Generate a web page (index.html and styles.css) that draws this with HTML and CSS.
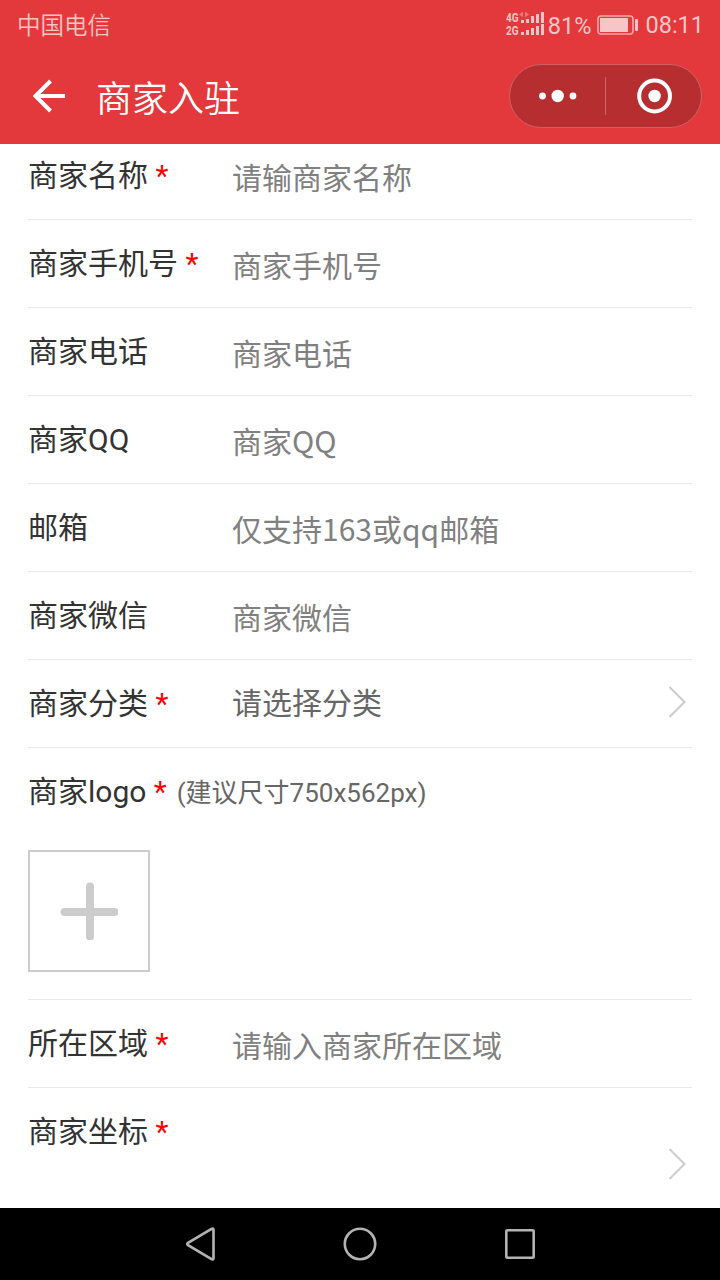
FILE: index.html
```html
<!DOCTYPE html>
<html lang="zh-CN">
<head>
    <meta charset="UTF-8">
    <meta name="viewport" content="width=device-width, initial-scale=1.0">
    <title>商家入驻</title>
    <link rel="stylesheet" href="styles.css">
</head>
<body>
    <div class="page">
        <div class="top">
            <!-- 状态栏 -->
            <div class="status-bar">
                <span class="carrier">中国电信</span>
                <div class="status-right">
                    <svg class="signal" width="40" height="28" viewBox="0 0 40 28">
                        <text x="1" y="12" textLength="12.5" lengthAdjust="spacingAndGlyphs">4G</text>
                        <text x="1" y="24.5" textLength="12.5" lengthAdjust="spacingAndGlyphs">2G</text>
                        <path class="data" d="M14 4.5l4-3v6zM24 4.5l-4-3v6z"/>
                        <path d="M16 10h3v3h-3zM21 9h3v4h-3zM26 6h3v7h-3zM31 4h3v9h-3zM36 2h3v11h-3z"/>
                        <path d="M16 22h3v3h-3zM21 20h3v5h-3zM26 18h3v7h-3zM31 16h3v9h-3zM36 14h3v11h-3z"/>
                    </svg>
                    <span class="percent">81%</span>
                    <svg class="battery" width="42" height="20" viewBox="0 0 42 20">
                        <rect x="1" y="1" width="35" height="18" rx="3" fill="none" stroke="#f4aaad" stroke-width="1.6"/>
                        <rect x="3" y="3" width="28" height="14" fill="#f7c5c7"/>
                        <rect x="38" y="4" width="3" height="12" rx="1" fill="#f7c5c7"/>
                    </svg>
                    <span class="time">08:11</span>
                </div>
            </div>
            <!-- 标题栏 -->
            <div class="nav-bar">
                <svg class="back" width="34" height="34" viewBox="0 0 34 34">
                    <path d="M33 17H3.5M18.5 2l-15 15 15 15" fill="none" stroke="#fff" stroke-width="4"/>
                </svg>
                <h1 class="title">商家入驻</h1>
                <div class="capsule">
                    <svg width="95" height="62" viewBox="0 0 95 62" fill="#fff">
                        <circle cx="32.5" cy="31" r="3.4"/>
                        <circle cx="47.7" cy="31" r="6.2"/>
                        <circle cx="63" cy="31" r="3.4"/>
                    </svg>
                    <span class="capsule-line"></span>
                    <svg width="95" height="62" viewBox="0 0 95 62">
                        <circle cx="48.6" cy="31" r="15.4" fill="none" stroke="#fff" stroke-width="4"/>
                        <circle cx="48.6" cy="31" r="6.2" fill="#fff"/>
                    </svg>
                </div>
            </div>
        </div>

        <!-- 表单 -->
        <div class="form">
            <div class="row">
                <div class="label">商家名称 <span class="required">*</span></div>
                <div class="placeholder">请输商家名称</div>
            </div>
            <div class="row">
                <div class="label">商家手机号 <span class="required">*</span></div>
                <div class="placeholder">商家手机号</div>
            </div>
            <div class="row">
                <div class="label">商家电话</div>
                <div class="placeholder">商家电话</div>
            </div>
            <div class="row">
                <div class="label">商家QQ</div>
                <div class="placeholder">商家QQ</div>
            </div>
            <div class="row">
                <div class="label">邮箱</div>
                <div class="placeholder">仅支持163或qq邮箱</div>
            </div>
            <div class="row">
                <div class="label">商家微信</div>
                <div class="placeholder">商家微信</div>
            </div>
            <div class="row">
                <div class="label">商家分类 <span class="required">*</span></div>
                <div class="picker">请选择分类</div>
                <svg class="arrow" width="18" height="32" viewBox="0 0 18 32">
                    <path d="M1.5 1l15 15-15 15"/>
                </svg>
            </div>
            <div class="upload-row">
                <div class="upload-label">商家logo <span class="required">*</span> <span class="tip">(建议尺寸750x562px)</span></div>
                <div class="upload-box">
                    <svg width="58" height="58" viewBox="0 0 58 58">
                        <path d="M4.5 30h50M30 4.5v50" stroke="#ccc" stroke-width="8" stroke-linecap="round"/>
                    </svg>
                </div>
            </div>
            <div class="row">
                <div class="label">所在区域 <span class="required">*</span></div>
                <div class="placeholder">请输入商家所在区域</div>
            </div>
            <div class="row location">
                <div class="label">商家坐标 <span class="required">*</span></div>
                <svg class="arrow" width="18" height="32" viewBox="0 0 18 32">
                    <path d="M1.5 1l15 15-15 15"/>
                </svg>
            </div>
        </div>

        <!-- 系统导航键 -->
        <div class="system-bar">
            <svg width="34" height="36" viewBox="0 0 34 36">
                <path d="M30.5 3.5v29a1 1 0 0 1-1.6.8L4.6 18.8a1 1 0 0 1 0-1.6L28.9 2.7A1 1 0 0 1 30.5 3.5z"/>
            </svg>
            <svg width="34" height="36" viewBox="0 0 34 36">
                <circle cx="17" cy="18" r="15.2"/>
            </svg>
            <svg width="34" height="36" viewBox="0 0 34 36">
                <rect x="3.3" y="4.3" width="27.4" height="27.4" rx="1"/>
            </svg>
        </div>
    </div>
</body>
</html>
```
FILE: styles.css
```css
* {
    box-sizing: border-box;
}
body {
    margin: 0;
    font-family: Roboto, "Noto Sans CJK SC", sans-serif;
    background-color: #fff;
    color: #333;
}
svg {
    display: block;
    flex: none;
}
.page {
    display: flex;
    flex-direction: column;
    width: 720px;
    height: 1280px;
    overflow: hidden;
}

/* 顶部红色区域 */
.top {
    position: relative;
    z-index: 1;
    flex: none;
    height: 144px;
    background-color: #e4393c;
}
.status-bar {
    display: flex;
    align-items: center;
    justify-content: space-between;
    height: 48px;
    padding: 0 16px 0 17px;
    color: #f7c5c7;
    font-size: 23.5px;
    line-height: 48px;
}
.carrier {
    font-family: "Noto Sans CJK SC", sans-serif;
    font-weight: 350;
    font-size: 23.5px;
}
.status-right {
    display: flex;
    align-items: center;
}
.signal {
    margin: -1px 3px 0 0;
    fill: #f7c5c7;
    font-family: Roboto, sans-serif;
    font-size: 12px;
    font-weight: 700;
}
.signal .data {
    fill: #ee7376;
}
.percent {
    padding-top: 3px;
}
.battery {
    margin: 2px 6px 0 6px;
}
.time {
    padding-top: 1px;
}
.nav-bar {
    display: flex;
    align-items: center;
    height: 96px;
    padding: 0 18px 0 32px;
}
.title {
    margin: 0 0 0 30px;
    font-family: "Noto Sans CJK SC", sans-serif;
    font-size: 36px;
    font-weight: 350;
    line-height: 90px;
    color: #fff;
}
.capsule {
    display: flex;
    align-items: center;
    width: 193px;
    height: 64px;
    margin-left: auto;
    border: 1px solid #cf6163;
    border-radius: 32px;
    background-color: #b72e30;
}
.capsule-line {
    width: 1px;
    height: 38px;
    background-color: #cd6668;
}

/* 表单，已向上滚动 12px */
.form {
    flex: 1;
    min-height: 0;
    margin-top: -12px;
    padding: 0 28px;
    overflow: hidden;
}
.row {
    display: flex;
    align-items: center;
    height: 88px;
    border-bottom: 1px solid #e9e9e9;
    font-size: 30px;
    line-height: 44px;
}
.label {
    width: 204px;
    white-space: nowrap;
}
.required {
    color: #f00;
}
.placeholder {
    font-family: "Noto Sans CJK SC", sans-serif;
    color: #808080;
}
.picker {
    color: #666;
}
.arrow {
    margin: -3px 6px 0 auto;
    fill: none;
    stroke: #ccc;
    stroke-width: 2;
}
.upload-row {
    height: 252px;
    border-bottom: 1px solid #e9e9e9;
}
.upload-label {
    font-size: 30px;
    line-height: 87px;
}
.tip {
    margin-left: 2.5px;
    font-size: 26px;
    color: #666;
}
.upload-box {
    display: flex;
    align-items: center;
    justify-content: center;
    width: 122px;
    height: 122px;
    margin-top: 13px;
    border: 2px solid #ccc;
}
.location {
    align-items: flex-start;
    height: 120px;
    padding-top: 22px;
    border-bottom: none;
}
.location .arrow {
    margin-top: 38px;
}

/* 底部导航键 */
.system-bar {
    display: flex;
    flex: none;
    align-items: center;
    justify-content: center;
    gap: 126px;
    height: 72px;
    background-color: #000;
}
.system-bar svg {
    fill: none;
    stroke: #b3b3b3;
    stroke-width: 2.6;
}
```
